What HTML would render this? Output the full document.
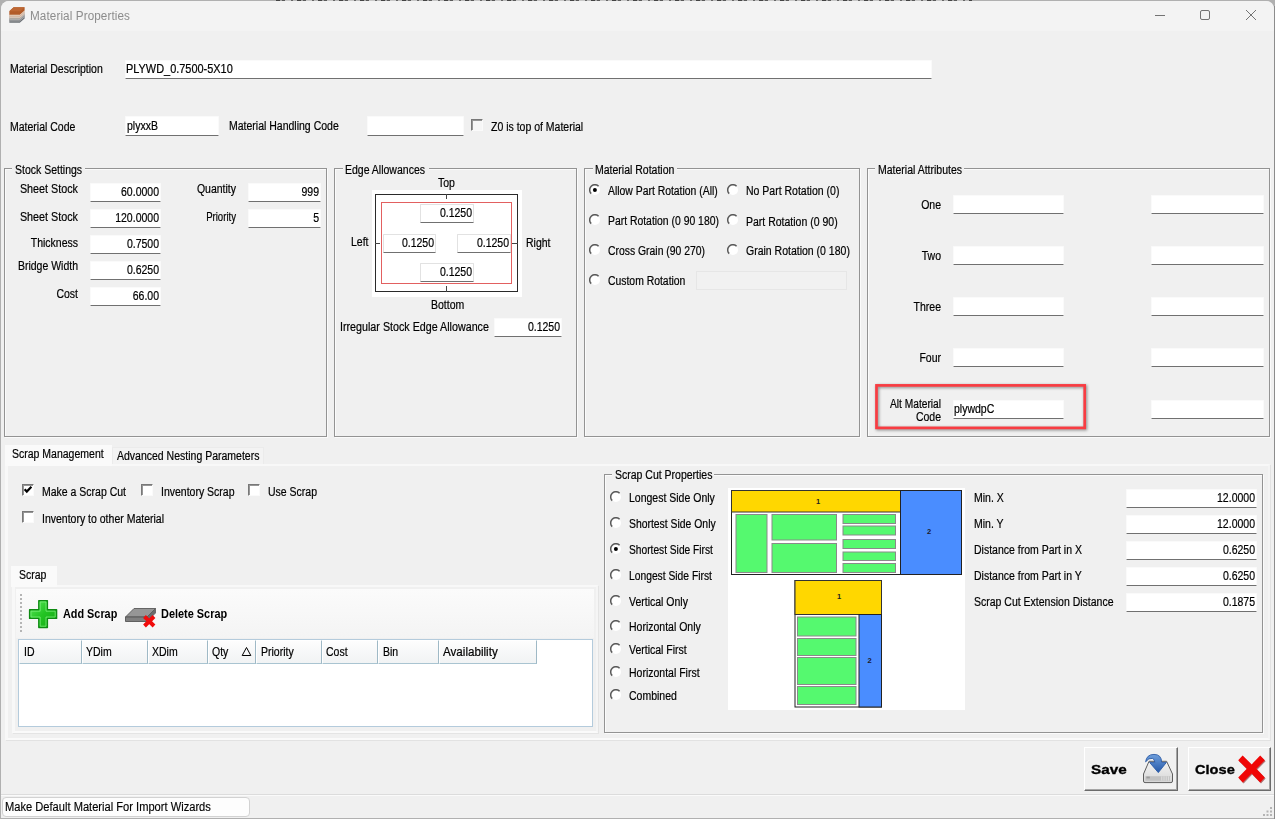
<!DOCTYPE html>
<html><head><meta charset="utf-8"><title>Material Properties</title>
<style>
*{box-sizing:border-box;margin:0;padding:0}
html,body{width:1275px;height:819px;overflow:hidden}
body{position:relative;background:#b0b0b0;font-family:"Liberation Sans",sans-serif;color:#000}
#win{position:absolute;left:1px;top:1px;width:1273px;height:817px;background:#f0f0f0;border-radius:8px 8px 0 0}
#tb{position:absolute;left:1px;top:1px;width:1273px;height:30px;background:#f3f3f3;border-radius:8px 8px 0 0}
.a{position:absolute}
.t,.r{position:absolute;white-space:nowrap;font-size:12px;line-height:14px;height:14px;margin-top:.4px;transform:scaleX(.875);transform-origin:0 0;-webkit-text-stroke:.2px #000}
.t{margin-left:-.5px}
.r{width:300px;margin-left:-300px;text-align:right;transform-origin:100% 0}
.in{position:absolute;height:19px;background:#fff;border:1px solid #fafafa;border-bottom:1px solid #707070;border-radius:1px}
.in.w{border-color:#e2e2e2 #e2e2e2 #707070}
.gb{position:absolute;border:1px solid #939393;box-shadow:1px 1px 0 #fbfbfb,inset 1px 1px 0 #fbfbfb}
.gl{position:absolute;background:#f0f0f0;height:14px}
.rd{position:absolute;width:11.4px;height:11.4px;border-radius:50%;background:#fff;border:1.7px solid;border-color:#505050 #fff #fff #505050;box-shadow:inset .5px .5px 0 rgba(0,0,0,.15)}
.rd.on::after{content:"";position:absolute;left:2px;top:2px;width:4px;height:4px;border-radius:50%;background:#000}
.cb{position:absolute;width:12px;height:12px;background:#fff;border:1px solid;border-color:#787878 #fafafa #fafafa #787878;box-shadow:inset 1px 1px 0 #969696}
</style></head><body>
<div id="win"></div>
<div id="tb"></div>
<div class="a" style="left:276px;top:0;width:696px;height:1px;background:repeating-linear-gradient(90deg,#444 0 4px,#a4a4a4 4px 6px,#5a5a5a 6px 9px,#c8c8c8 9px 15px,#666 15px 17px,#bbb 17px 21px)"></div>
<div class="a" style="left:1274px;top:6px;width:1px;height:813px;background:#8c8c8c"></div>
<svg class="a" style="left:8px;top:6px" width="18" height="18" viewBox="0 0 18 18">
<path d="M1.3 13.4 L5.4 9.6 L16.6 9.6 L16.6 12.4 L11.8 16.8 L1.3 16.8 Z" fill="#6b7075"/>
<path d="M1.3 11.4 L5.4 7.6 L16.6 7.6 L16.6 10.4 L11.8 14.6 L1.3 14.6 Z" fill="#8d9093"/>
<path d="M1.3 9.6 L5.4 5.8 L16.6 5.8 L16.6 8.4 L11.8 12.6 L1.3 12.6 Z" fill="#c9b3a3"/>
<path d="M1.3 8.4 L5.4 4.6 L16.6 4.6 L16.6 6.6 L11.8 10.8 L1.3 10.8 Z" fill="#d7b79f"/>
<path d="M1.3 5.2 L5.6 1.2 L16.6 1.2 L16.6 4.4 L11.8 8.8 L1.3 8.8 Z" fill="#b25c2a"/>
<path d="M1.3 5.2 L5.6 1.2 L16.6 1.2 L12.2 5.2 Z" fill="#bd6734"/>
<path d="M1.3 9.3 H11.6 L16.6 4.9 M1.3 11.3 H11.6 L16.6 6.9 M1.3 13.3 H11.6 L16.6 8.9 M1.3 15 H11.6 L16.6 10.7" stroke="#f3ece6" stroke-width=".5" fill="none" opacity=".8"/>
</svg>
<span class="a" style="left:29.8px;top:7px;font-size:12px;line-height:18px;color:#8c8c8c;white-space:nowrap;transform:scaleX(.975);transform-origin:0 0;letter-spacing:.1px">Material Properties</span>
<svg class="a" style="left:1150px;top:5px" width="112" height="22" viewBox="0 0 112 22" fill="none" stroke="#737373" stroke-width="1">
<path d="M5 10.5 H15"/>
<rect x="50.5" y="5.5" width="9" height="9" rx="1.5"/>
<path d="M96 5 L106 15 M106 5 L96 15"/>
</svg>

<span class="t" style="left:10px;top:61.5px">Material Description</span>
<div class="in" style="left:125px;top:60px;width:807px"></div>
<span class="t" style="left:126.2px;top:61.5px;transform:scaleX(0.911)">PLYWD_0.7500-5X10</span>
<span class="t" style="left:10px;top:119.6px">Material Code</span>
<div class="in" style="left:125px;top:116px;width:94px;height:20px"></div>
<span class="t" style="left:127px;top:118.5px">plyxxB</span>
<span class="t" style="left:229.4px;top:118.5px">Material Handling Code</span>
<div class="in" style="left:367px;top:116px;width:97px;height:20px"></div>
<div class="cb" style="left:471px;top:119px;background:#f6f6f6"></div>
<span class="t" style="left:491px;top:119.5px">Z0 is top of Material</span>

<div class="gb" style="left:4px;top:168px;width:323px;height:269px"></div><div class="gl" style="left:12px;top:162px;width:73px"></div><span class="t" style="left:15px;top:162.3px">Stock Settings</span>
<span class="r" style="left:78px;top:181.7px;transform:scaleX(.898)">Sheet Stock</span>
<span class="r" style="left:78px;top:209.7px;transform:scaleX(.898)">Sheet Stock</span>
<span class="r" style="left:78px;top:235.7px">Thickness</span>
<span class="r" style="left:78px;top:259.0px">Bridge Width</span>
<span class="r" style="left:78px;top:287.1px">Cost</span>
<div class="in" style="left:90px;top:183px;width:71px"></div><span class="r" style="left:159px;top:184.5px">60.0000</span>
<div class="in" style="left:90px;top:209px;width:71px"></div><span class="r" style="left:159px;top:210.5px">120.0000</span>
<div class="in" style="left:90px;top:235px;width:71px"></div><span class="r" style="left:159px;top:236.5px">0.7500</span>
<div class="in" style="left:90px;top:261px;width:71px"></div><span class="r" style="left:159px;top:262.5px">0.6250</span>
<div class="in" style="left:90px;top:287px;width:71px"></div><span class="r" style="left:159px;top:288.5px">66.00</span>
<span class="r" style="left:236.3px;top:181.6px">Quantity</span><span class="r" style="left:236.3px;top:209.7px;transform:scaleX(.8)">Priority</span>
<div class="in" style="left:248px;top:183px;width:73px"></div><span class="r" style="left:319px;top:184.5px">999</span>
<div class="in" style="left:248px;top:209px;width:73px"></div><span class="r" style="left:319px;top:210.5px">5</span>
<div class="gb" style="left:334px;top:168px;width:243px;height:269px"></div><div class="gl" style="left:342.6px;top:162px;width:86px"></div><span class="t" style="left:345.6px;top:162.3px">Edge Allowances</span>
<span class="t" style="left:438.5px;top:175.7px">Top</span>
<div class="a" style="left:372px;top:190px;width:150px;height:107px;background:#fff"></div>
<div class="a" style="left:375px;top:194px;width:143px;height:98px;border:1px solid #2a2a2a"></div>
<div class="a" style="left:381px;top:202px;width:131px;height:82px;border:1px solid #e26060"></div>
<div class="a" style="left:446px;top:194px;width:1px;height:5px;background:#444"></div>
<div class="a" style="left:446px;top:286px;width:1px;height:6px;background:#444"></div>
<div class="a" style="left:375px;top:243px;width:5px;height:1px;background:#444"></div>
<div class="a" style="left:512px;top:243px;width:6px;height:1px;background:#444"></div>
<span class="t" style="left:351.3px;top:235px">Left</span>
<span class="t" style="left:526.5px;top:236px">Right</span>
<span class="t" style="left:431.4px;top:297.6px">Bottom</span>
<span class="t" style="left:340.4px;top:319.5px;transform:scaleX(0.893)">Irregular Stock Edge Allowance</span>
<div class="in w" style="left:420px;top:204px;width:54px"></div><span class="r" style="left:472px;top:205.5px">0.1250</span>
<div class="in w" style="left:383px;top:234px;width:53px"></div><span class="r" style="left:434px;top:235.5px">0.1250</span>
<div class="in w" style="left:457px;top:234px;width:54px"></div><span class="r" style="left:509px;top:235.5px">0.1250</span>
<div class="in w" style="left:420px;top:263px;width:54px"></div><span class="r" style="left:472px;top:264.5px">0.1250</span>
<div class="in" style="left:494px;top:318px;width:68px"></div><span class="r" style="left:560px;top:319.5px">0.1250</span>
<div class="gb" style="left:584px;top:168px;width:276px;height:269px"></div><div class="gl" style="left:592.5px;top:162px;width:84px"></div><span class="t" style="left:595.5px;top:162.3px">Material Rotation</span>
<svg class="a" style="left:589px;top:184px" width="12" height="12" viewBox="0 0 12 12"><circle cx="5.9" cy="5.9" r="5.1" fill="#fff"/><path d="M2.2 9.6 A5.2 5.2 0 0 1 9.6 2.2" stroke="#5a5a5a" stroke-width="1.5" fill="none"/><circle cx="5.9" cy="5.9" r="2" fill="#000"/></svg><span class="t" style="left:608.8px;top:183.7px;transform:scaleX(.866)">Allow Part Rotation (All)</span>
<svg class="a" style="left:589px;top:214px" width="12" height="12" viewBox="0 0 12 12"><circle cx="5.9" cy="5.9" r="5.1" fill="#fff"/><path d="M2.2 9.6 A5.2 5.2 0 0 1 9.6 2.2" stroke="#5a5a5a" stroke-width="1.5" fill="none"/></svg><span class="t" style="left:608.8px;top:213.7px;transform:scaleX(.866)">Part Rotation (0 90 180)</span>
<svg class="a" style="left:589px;top:244px" width="12" height="12" viewBox="0 0 12 12"><circle cx="5.9" cy="5.9" r="5.1" fill="#fff"/><path d="M2.2 9.6 A5.2 5.2 0 0 1 9.6 2.2" stroke="#5a5a5a" stroke-width="1.5" fill="none"/></svg><span class="t" style="left:608.8px;top:243.7px;transform:scaleX(.866)">Cross Grain (90 270)</span>
<svg class="a" style="left:589px;top:274px" width="12" height="12" viewBox="0 0 12 12"><circle cx="5.9" cy="5.9" r="5.1" fill="#fff"/><path d="M2.2 9.6 A5.2 5.2 0 0 1 9.6 2.2" stroke="#5a5a5a" stroke-width="1.5" fill="none"/></svg><span class="t" style="left:608.8px;top:273.7px;transform:scaleX(.866)">Custom Rotation</span>
<svg class="a" style="left:727px;top:184px" width="12" height="12" viewBox="0 0 12 12"><circle cx="5.9" cy="5.9" r="5.1" fill="#fff"/><path d="M2.2 9.6 A5.2 5.2 0 0 1 9.6 2.2" stroke="#5a5a5a" stroke-width="1.5" fill="none"/></svg><span class="t" style="left:746.9px;top:183.8px">No Part Rotation (0)</span>
<svg class="a" style="left:727px;top:214px" width="12" height="12" viewBox="0 0 12 12"><circle cx="5.9" cy="5.9" r="5.1" fill="#fff"/><path d="M2.2 9.6 A5.2 5.2 0 0 1 9.6 2.2" stroke="#5a5a5a" stroke-width="1.5" fill="none"/></svg><span class="t" style="left:746.9px;top:214.9px">Part Rotation (0 90)</span>
<svg class="a" style="left:727px;top:244px" width="12" height="12" viewBox="0 0 12 12"><circle cx="5.9" cy="5.9" r="5.1" fill="#fff"/><path d="M2.2 9.6 A5.2 5.2 0 0 1 9.6 2.2" stroke="#5a5a5a" stroke-width="1.5" fill="none"/></svg><span class="t" style="left:746.9px;top:243.8px">Grain Rotation (0 180)</span>
<div class="a" style="left:696px;top:271px;width:151px;height:19px;background:#f1f1f1;border:1px solid #e6e6e6"></div>
<div class="gb" style="left:867px;top:168px;width:403px;height:269px"></div><div class="gl" style="left:875px;top:162px;width:89px"></div><span class="t" style="left:878px;top:162.3px">Material Attributes</span>
<span class="r" style="left:941.4px;top:197.5px">One</span>
<span class="r" style="left:941.4px;top:248.5px">Two</span>
<span class="r" style="left:941.4px;top:299.5px">Three</span>
<span class="r" style="left:941.4px;top:350.5px">Four</span>
<div class="in" style="left:953px;top:195px;width:111px"></div><div class="in" style="left:1151px;top:195px;width:113px"></div>
<div class="in" style="left:953px;top:246px;width:111px"></div><div class="in" style="left:1151px;top:246px;width:113px"></div>
<div class="in" style="left:953px;top:297px;width:111px"></div><div class="in" style="left:1151px;top:297px;width:113px"></div>
<div class="in" style="left:953px;top:348px;width:111px"></div><div class="in" style="left:1151px;top:348px;width:113px"></div>
<div class="in" style="left:953px;top:400px;width:111px"></div><div class="in" style="left:1151px;top:400px;width:113px"></div>
<span class="r" style="left:941.4px;top:396.3px;transform:scaleX(0.850)">Alt Material</span><span class="r" style="left:941.4px;top:409.2px">Code</span>
<span class="t" style="left:954.4px;top:401.7px">plywdpC</span>
<svg class="a" style="left:868px;top:378px;overflow:visible;filter:drop-shadow(1.2px 1.6px 1.6px rgba(0,0,0,.45))" width="226" height="60" viewBox="868 378 226 60"><rect x="876.5" y="385.4" width="208.2" height="42.5" fill="none" stroke="#f83c42" stroke-width="2.7"/></svg>

<div class="a" style="left:5px;top:464px;width:1265px;height:276px;border:solid #f8f8f8;border-width:2px 2px 2px 3px;border-color:#f8f8f8 #f4f4f4 #fafafa #f8f8f8;box-shadow:1px 1px 0 #e2e2e2"></div>
<div class="a" style="left:112px;top:447px;width:152px;height:17px;background:#f3f3f3;border:1px solid #ebebeb;border-bottom:none"></div>
<div class="a" style="left:5px;top:445px;width:107px;height:21px;background:#fafafa"></div>
<span class="t" style="left:12px;top:446.2px">Scrap Management</span>
<span class="t" style="left:117px;top:448.3px">Advanced Nesting Parameters</span>
<div class="cb" style="left:22px;top:484px"></div><svg class="a" style="left:22px;top:484.3px" width="12" height="12" viewBox="0 0 12 12"><path d="M2.6 5.2 L4.8 7.6 L9.4 2.8" fill="none" stroke="#000" stroke-width="2.2"/></svg><span class="t" style="left:42px;top:484.5px">Make a Scrap Cut</span>
<div class="cb" style="left:141px;top:484px"></div><span class="t" style="left:161px;top:484.5px">Inventory Scrap</span>
<div class="cb" style="left:248px;top:484px"></div><span class="t" style="left:268px;top:484.5px">Use Scrap</span>
<div class="cb" style="left:22px;top:511px"></div><span class="t" style="left:42px;top:511.5px">Inventory to other Material</span>
<div class="a" style="left:12px;top:585px;width:586px;height:148px;border:solid #f8f8f8;border-width:2px 2px 2px 3px;border-color:#f8f8f8 #f5f5f5 #fafafa #f8f8f8;box-shadow:1px 1px 0 #e4e4e4"></div>
<div class="a" style="left:11px;top:566px;width:46px;height:21px;background:#fafafa"></div>
<span class="t" style="left:19.3px;top:567.2px">Scrap</span>
<div class="a" style="left:16px;top:589px;width:578px;height:49px;background:linear-gradient(#fbfbfb,#f4f4f4)"></div>
<div class="a" style="left:20px;top:594px;width:2px;height:39px;background:repeating-linear-gradient(#b5b5b5 0 2px,transparent 2px 4px)"></div>
<svg class="a" style="left:28px;top:599px" width="30" height="30" viewBox="0 0 30 30"><defs><linearGradient id="gp" x1="0" y1="0" x2="1" y2="1"><stop offset="0" stop-color="#5fe85f"/><stop offset=".5" stop-color="#23c423"/><stop offset="1" stop-color="#12a612"/></linearGradient></defs>
<path d="M10.8 1.6 H19.4 V10.8 H28.6 V19.4 H19.4 V28.6 H10.8 V19.4 H1.6 V10.8 H10.8 Z" fill="url(#gp)" stroke="#0e8a12" stroke-width="1.4" stroke-linejoin="round"/><path d="M12.2 3 H18 V12.2 H27.2 V18 H18 V27.2 H12.2 V18 H3 V12.2 H12.2 Z" fill="none" stroke="#7df07d" stroke-width="1" opacity=".75"/></svg>
<span class="a" style="left:62.5px;top:606.7px;font-size:12.5px;line-height:15px;font-weight:bold;white-space:nowrap;transform:scaleX(.868);transform-origin:0 0">Add Scrap</span>
<svg class="a" style="left:124px;top:606px" width="34" height="24" viewBox="0 0 34 24">
<path d="M1.5 11 L10 2.5 H31.5 L23 11 Z" fill="#969696" stroke="#5a5a5a" stroke-width=".9"/>
<path d="M1.5 11 H23 V15.5 H1.5 Z" fill="#808080" stroke="#565656" stroke-width=".9"/>
<path d="M23 11 L31.5 2.5 V7 L23 15.5 Z" fill="#6c6c6c" stroke="#5c5c5c" stroke-width=".8"/>
<path d="M20.5 10.5 L30 20 M30 10.5 L20.5 20" stroke="#f00c0c" stroke-width="3.9" stroke-linecap="butt"/>
</svg>
<span class="a" style="left:160.5px;top:606.7px;font-size:12.5px;line-height:15px;font-weight:bold;white-space:nowrap;transform:scaleX(.873);transform-origin:0 0">Delete Scrap</span>
<div class="a" style="left:18px;top:639px;width:575px;height:88px;background:#fff;border:1px solid #b4cbdc"></div>
<div class="a" style="left:19px;top:640px;width:63px;height:24px;background:linear-gradient(#fdfdfd,#f1f3f4);border:1px solid;border-color:#fff #9fb9c6 #a9c4d1 #fff"></div><span class="t" style="left:24.3px;top:644.5px">ID</span>
<div class="a" style="left:82px;top:640px;width:66px;height:24px;background:linear-gradient(#fdfdfd,#f1f3f4);border:1px solid;border-color:#fff #9fb9c6 #a9c4d1 #fff"></div><span class="t" style="left:86.6px;top:644.5px">YDim</span>
<div class="a" style="left:148px;top:640px;width:60px;height:24px;background:linear-gradient(#fdfdfd,#f1f3f4);border:1px solid;border-color:#fff #9fb9c6 #a9c4d1 #fff"></div><span class="t" style="left:152.6px;top:644.5px">XDim</span>
<div class="a" style="left:208px;top:640px;width:48px;height:24px;background:linear-gradient(#fdfdfd,#f1f3f4);border:1px solid;border-color:#fff #9fb9c6 #a9c4d1 #fff"></div><span class="t" style="left:212.9px;top:644.5px">Qty</span>
<div class="a" style="left:256px;top:640px;width:66px;height:24px;background:linear-gradient(#fdfdfd,#f1f3f4);border:1px solid;border-color:#fff #9fb9c6 #a9c4d1 #fff"></div><span class="t" style="left:261px;top:644.5px">Priority</span>
<div class="a" style="left:322px;top:640px;width:56px;height:24px;background:linear-gradient(#fdfdfd,#f1f3f4);border:1px solid;border-color:#fff #9fb9c6 #a9c4d1 #fff"></div><span class="t" style="left:326.9px;top:644.5px">Cost</span>
<div class="a" style="left:378px;top:640px;width:61px;height:24px;background:linear-gradient(#fdfdfd,#f1f3f4);border:1px solid;border-color:#fff #9fb9c6 #a9c4d1 #fff"></div><span class="t" style="left:383px;top:644.5px">Bin</span>
<div class="a" style="left:439px;top:640px;width:98px;height:24px;background:linear-gradient(#fdfdfd,#f1f3f4);border:1px solid;border-color:#fff #9fb9c6 #a9c4d1 #fff"></div><span class="t" style="left:443.8px;top:644.5px;transform:scaleX(0.969)">Availability</span>
<svg class="a" style="left:241px;top:646px" width="11" height="11" viewBox="0 0 11 11"><path d="M1.2 9.5 L5.5 1.5 L9.8 9.5 Z" fill="none" stroke="#000" stroke-width="1"/></svg>
<div class="gb" style="left:604px;top:474px;width:659px;height:259px"></div><div class="gl" style="left:612px;top:468px;width:102px"></div><span class="t" style="left:615.5px;top:467.7px">Scrap Cut Properties</span>
<svg class="a" style="left:610px;top:491px" width="12" height="12" viewBox="0 0 12 12"><circle cx="5.9" cy="5.9" r="5.1" fill="#fff"/><path d="M2.2 9.6 A5.2 5.2 0 0 1 9.6 2.2" stroke="#5a5a5a" stroke-width="1.5" fill="none"/></svg><span class="t" style="left:629.1px;top:490.6px">Longest Side Only</span>
<svg class="a" style="left:610px;top:517px" width="12" height="12" viewBox="0 0 12 12"><circle cx="5.9" cy="5.9" r="5.1" fill="#fff"/><path d="M2.2 9.6 A5.2 5.2 0 0 1 9.6 2.2" stroke="#5a5a5a" stroke-width="1.5" fill="none"/></svg><span class="t" style="left:629.1px;top:516.6px;transform:scaleX(.866)">Shortest Side Only</span>
<svg class="a" style="left:610px;top:543px" width="12" height="12" viewBox="0 0 12 12"><circle cx="5.9" cy="5.9" r="5.1" fill="#fff"/><path d="M2.2 9.6 A5.2 5.2 0 0 1 9.6 2.2" stroke="#5a5a5a" stroke-width="1.5" fill="none"/><circle cx="5.9" cy="5.9" r="2" fill="#000"/></svg><span class="t" style="left:629.1px;top:542.6px;transform:scaleX(.85)">Shortest Side First</span>
<svg class="a" style="left:610px;top:569px" width="12" height="12" viewBox="0 0 12 12"><circle cx="5.9" cy="5.9" r="5.1" fill="#fff"/><path d="M2.2 9.6 A5.2 5.2 0 0 1 9.6 2.2" stroke="#5a5a5a" stroke-width="1.5" fill="none"/></svg><span class="t" style="left:629.1px;top:568.6px;transform:scaleX(.857)">Longest Side First</span>
<svg class="a" style="left:610px;top:595px" width="12" height="12" viewBox="0 0 12 12"><circle cx="5.9" cy="5.9" r="5.1" fill="#fff"/><path d="M2.2 9.6 A5.2 5.2 0 0 1 9.6 2.2" stroke="#5a5a5a" stroke-width="1.5" fill="none"/></svg><span class="t" style="left:629.1px;top:594.6px">Vertical Only</span>
<svg class="a" style="left:610px;top:620px" width="12" height="12" viewBox="0 0 12 12"><circle cx="5.9" cy="5.9" r="5.1" fill="#fff"/><path d="M2.2 9.6 A5.2 5.2 0 0 1 9.6 2.2" stroke="#5a5a5a" stroke-width="1.5" fill="none"/></svg><span class="t" style="left:629.1px;top:619.6px">Horizontal Only</span>
<svg class="a" style="left:610px;top:643px" width="12" height="12" viewBox="0 0 12 12"><circle cx="5.9" cy="5.9" r="5.1" fill="#fff"/><path d="M2.2 9.6 A5.2 5.2 0 0 1 9.6 2.2" stroke="#5a5a5a" stroke-width="1.5" fill="none"/></svg><span class="t" style="left:629.1px;top:642.6px">Vertical First</span>
<svg class="a" style="left:610px;top:666px" width="12" height="12" viewBox="0 0 12 12"><circle cx="5.9" cy="5.9" r="5.1" fill="#fff"/><path d="M2.2 9.6 A5.2 5.2 0 0 1 9.6 2.2" stroke="#5a5a5a" stroke-width="1.5" fill="none"/></svg><span class="t" style="left:629.1px;top:665.6px">Horizontal First</span>
<svg class="a" style="left:610px;top:689px" width="12" height="12" viewBox="0 0 12 12"><circle cx="5.9" cy="5.9" r="5.1" fill="#fff"/><path d="M2.2 9.6 A5.2 5.2 0 0 1 9.6 2.2" stroke="#5a5a5a" stroke-width="1.5" fill="none"/></svg><span class="t" style="left:629.1px;top:688.6px">Combined</span>
<svg class="a" style="left:728px;top:488px" width="237" height="222" viewBox="728 488 237 222" font-family="Liberation Sans, sans-serif">
<rect x="728" y="488" width="238" height="222" fill="#fff"/>
<rect x="731.5" y="490.5" width="230" height="84" fill="#fff" stroke="#222" stroke-width="1"/>
<rect x="731.5" y="490.5" width="169" height="21.5" fill="#ffd700" stroke="#333" stroke-width="1"/>
<rect x="900.5" y="490.5" width="61" height="84" fill="#4a8dff" stroke="#222" stroke-width="1"/>
<g fill="#55f96f" stroke="#8a8a8a" stroke-width="1">
<rect x="736" y="514.5" width="31" height="58"/>
<rect x="772" y="514.5" width="64.5" height="25.5"/>
<rect x="772" y="543.5" width="64.5" height="29"/>
<rect x="843" y="514.5" width="52.5" height="9"/>
<rect x="843" y="526" width="52.5" height="9"/>
<rect x="843" y="539.5" width="52.5" height="9"/>
<rect x="843" y="552" width="52.5" height="8.5"/>
<rect x="843" y="563.5" width="52.5" height="9"/>
</g>
<text x="816" y="503.5" font-size="7.5" font-weight="bold" fill="#222">1</text>
<text x="927" y="533.5" font-size="7.5" font-weight="bold" fill="#1a1a2a">2</text>
<rect x="795" y="580.5" width="86.5" height="126.5" fill="#fff" stroke="#222" stroke-width="1"/>
<rect x="795" y="580.5" width="86.5" height="34" fill="#ffd700" stroke="#333" stroke-width="1"/>
<rect x="859" y="614.5" width="22.5" height="92.5" fill="#4a8dff" stroke="#222" stroke-width="1"/>
<g fill="#55f96f" stroke="#8a8a8a" stroke-width="1">
<rect x="797.5" y="617" width="58.5" height="19"/>
<rect x="797.5" y="638.5" width="58.5" height="17"/>
<rect x="797.5" y="657.5" width="58.5" height="27"/>
<rect x="797.5" y="686.5" width="58.5" height="18"/>
</g>
<text x="837" y="599" font-size="7.5" font-weight="bold" fill="#222">1</text>
<text x="867.5" y="663" font-size="7.5" font-weight="bold" fill="#1a1a2a">2</text>
</svg>
<span class="t" style="left:974.6px;top:490.6px">Min. X</span><div class="in" style="left:1126px;top:489px;width:131px"></div><span class="r" style="left:1255px;top:490.5px">12.0000</span>
<span class="t" style="left:974.6px;top:516.9px">Min. Y</span><div class="in" style="left:1126px;top:515px;width:131px"></div><span class="r" style="left:1255px;top:516.5px">12.0000</span>
<span class="t" style="left:974.6px;top:542.7px">Distance from Part in X</span><div class="in" style="left:1126px;top:541px;width:131px"></div><span class="r" style="left:1255px;top:542.5px">0.6250</span>
<span class="t" style="left:974.6px;top:569.1px">Distance from Part in Y</span><div class="in" style="left:1126px;top:567px;width:131px"></div><span class="r" style="left:1255px;top:568.5px">0.6250</span>
<span class="t" style="left:974.6px;top:595.0px">Scrap Cut Extension Distance</span><div class="in" style="left:1126px;top:593px;width:131px"></div><span class="r" style="left:1255px;top:594.5px">0.1875</span>

<div class="a" style="left:1084px;top:747px;width:94px;height:44px;background:#f1f1f1;border:1px solid;border-color:#fff #6b6b6b #6b6b6b #fff;box-shadow:inset -1px -1px 0 #a5a5a5"></div>
<span class="a" style="left:1091px;top:761.2px;font-size:13.4px;line-height:17px;font-weight:bold;white-space:nowrap;-webkit-text-stroke:.35px #000;transform:scaleX(1.14);transform-origin:0 0">Save</span>
<svg class="a" style="left:1142px;top:753px" width="32" height="31" viewBox="0 0 32 31">
<defs><linearGradient id="dr" x1="0" y1="0" x2="0" y2="1"><stop offset="0" stop-color="#f4f4f4"/><stop offset="1" stop-color="#d6d6d6"/></linearGradient><linearGradient id="ar" x1="0" y1="0" x2="0" y2="1"><stop offset="0" stop-color="#6f9fdc"/><stop offset="1" stop-color="#2558a8"/></linearGradient></defs>
<path d="M7 8.3 H24.6 L30.5 21 V28 Q30.5 29.6 29 29.6 H3 Q1.5 29.6 1.5 28 V21 Z" fill="url(#dr)" stroke="#5e5e5e" stroke-width="1" stroke-linejoin="round"/>
<rect x="3.4" y="23.2" width="25.4" height="4.6" fill="#c2c2c2"/>
<rect x="4.4" y="23.6" width="3.4" height="1.8" fill="#9c9c9c"/>
<path d="M19.8 23.4 V27.6 M22 23.4 V27.6 M24.2 23.4 V27.6 M26.4 23.4 V27.6 M28.4 23.4 V27.6" stroke="#e9e9e9" stroke-width=".8"/>
<path d="M3.6 8.8 Q4.6 1.4 12 1.4 Q19.6 1.4 19.6 9.4 H24.4 L16.3 19.6 L7.6 9.4 H12.8 Q12.6 6 10.4 5.4 Q6.8 4.6 3.6 8.8 Z" fill="url(#ar)" stroke="#2a5aa6" stroke-width=".9" stroke-linejoin="round"/>
</svg>
<div class="a" style="left:1188px;top:747px;width:83px;height:44px;background:#f1f1f1;border:1px solid;border-color:#fff #6b6b6b #6b6b6b #fff;box-shadow:inset -1px -1px 0 #a5a5a5"></div>
<span class="a" style="left:1195px;top:761.2px;font-size:13.4px;line-height:17px;font-weight:bold;white-space:nowrap;-webkit-text-stroke:.35px #000;transform:scaleX(1.09);transform-origin:0 0">Close</span>
<svg class="a" style="left:1237px;top:754px" width="30" height="31" viewBox="0 0 30 31">
<path d="M6.2 2.6 L15.2 11.3 L23.8 2.6 L28.6 7.2 L20.2 15.8 L28.6 24.6 L24 29.4 L15.2 20.6 L6.6 29.4 L2 24.6 L10.4 15.8 L2 7.2 Z" fill="#7a0a0a" opacity=".55"/>
<path d="M5.6 1.6 L14.6 10.4 L23.2 1.6 L27.8 6.2 L19.4 14.8 L27.8 23.6 L23.2 28.4 L14.6 19.6 L5.8 28.4 L1.2 23.6 L9.8 14.8 L1.2 6.2 Z" fill="#f00505"/>
</svg>
<svg class="a" style="left:1262px;top:806px" width="12" height="12" viewBox="0 0 12 12" fill="#b4b4b4"><rect x="8" y="8" width="2" height="2"/><rect x="8" y="4.5" width="2" height="2"/><rect x="4.5" y="8" width="2" height="2"/><rect x="8" y="1" width="2" height="2"/><rect x="4.5" y="4.5" width="2" height="2"/><rect x="1" y="8" width="2" height="2"/></svg>
<div class="a" style="left:1px;top:794px;width:1273px;height:1px;background:#dcdcdc"></div>
<div class="a" style="left:1px;top:795px;width:1273px;height:1px;background:#fafafa"></div>
<div class="a" style="left:2px;top:797px;width:248px;height:20px;background:#fdfdfd;border:1px solid #d2d2d2;border-radius:4px"></div>
<span class="a" style="left:4.8px;top:799px;font-size:12px;line-height:16px;white-space:nowrap;-webkit-text-stroke:.15px #000;transform:scaleX(.927);transform-origin:0 0">Make Default Material For Import Wizards</span>

</body></html>
